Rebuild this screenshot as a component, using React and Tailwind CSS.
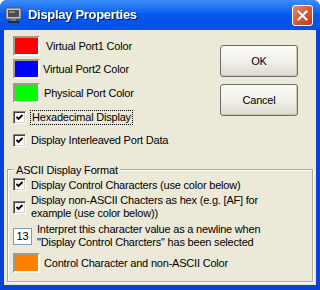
import React from "react";

const font = { fontFamily: '"Liberation Sans", Arial, sans-serif' };

function Swatch({ color }) {
  return (
    <div className="w-[27px] h-[20px] shrink-0 border-2 border-t-[#9d9b8e] border-l-[#9d9b8e] border-r-white border-b-white">
      <div className={`w-full h-full ${color}`}></div>
    </div>
  );
}

function CheckBox() {
  return (
    <div className="w-[13px] h-[13px] shrink-0 bg-white border border-t-[#808080] border-l-[#808080] border-r-white border-b-white shadow-[inset_1px_1px_0_#404040,inset_-1px_-1px_0_#d4d0c8] flex items-center justify-center">
      <svg width="9" height="9" viewBox="0 0 9 9">
        <path d="M1.5 4 L3.5 6 L7.5 2" stroke="#000" strokeWidth="1.8" fill="none" />
      </svg>
    </div>
  );
}

function XpButton({ children }) {
  return (
    <div className="w-[78px] h-[32px] rounded-[3px] border border-[#6d6d66] bg-gradient-to-b from-[#fbfbf8] via-[#f1f0ea] to-[#dcdad0] shadow-[inset_-1px_-1px_0_#c9c6b8] flex items-center justify-center text-[11px] text-black">
      {children}
    </div>
  );
}

export default function App() {
  return (
    <div className="w-[320px] h-[290px] flex flex-col bg-[#0842d8] rounded-t-[7px] overflow-hidden" style={font}>
      <div className="h-[30px] shrink-0 flex items-center bg-gradient-to-b from-[#3c8ef9] via-[#0358ee] to-[#0350e6] px-[5px]">
        <svg width="18" height="17" viewBox="0 0 18 17" className="shrink-0">
          <rect x="1" y="1" width="15" height="11" fill="#c8c8c8" stroke="#555" />
          <rect x="3" y="3" width="11" height="7" fill="#4d4d4d" />
          <rect x="4" y="4" width="6" height="2" fill="#8a8a8a" />
          <rect x="6" y="12" width="5" height="2" fill="#777" />
          <rect x="3" y="14" width="11" height="2" fill="#2a2a2a" />
        </svg>
        <div className="ml-[5px] text-white font-bold text-[13px] tracking-[-0.3px] drop-shadow-[1px_1px_0_#0a1f6a]">
          Display Properties
        </div>
        <div className="ml-auto mr-[2px] w-[21px] h-[21px] rounded-[3px] border border-white bg-gradient-to-br from-[#e8866a] via-[#d65a34] to-[#c1391a] flex items-center justify-center">
          <svg width="11" height="11" viewBox="0 0 11 11">
            <path d="M1.5 1.5 L9.5 9.5 M9.5 1.5 L1.5 9.5" stroke="#fff" strokeWidth="2" strokeLinecap="square" />
          </svg>
        </div>
      </div>
      <div className="flex-1 mx-[4px] mb-[5px] bg-[#ece9d8] text-[11px] tracking-[-0.2px] text-black flex flex-col">
        <div className="flex pl-[9px] pt-[6px]">
          <div className="flex flex-col">
            <div className="flex items-center h-[20px]">
              <Swatch color="bg-[#ff0000]" />
              <span className="ml-[6px]">Virtual Port1 Color</span>
            </div>
            <div className="flex items-center h-[20px] mt-[3px]">
              <Swatch color="bg-[#0000ff]" />
              <span className="ml-[3px]">Virtual Port2 Color</span>
            </div>
            <div className="flex items-center h-[20px] mt-[4px]">
              <Swatch color="bg-[#00ff00]" />
              <span className="ml-[4px]">Physical Port Color</span>
            </div>
          </div>
          <div className="ml-auto mr-[18px] mt-[9px] flex flex-col gap-[7px]">
            <XpButton>OK</XpButton>
            <XpButton>Cancel</XpButton>
          </div>
        </div>
        <div className="pl-[9px] mt-[-6px] flex flex-col gap-[7px]">
          <div className="flex items-center">
            <CheckBox />
            <span className="ml-[4px] px-[1px] border border-dotted border-black leading-[13px]">Hexadecimal Display</span>
          </div>
          <div className="flex items-center">
            <CheckBox />
            <span className="ml-[5px]">Display Interleaved Port Data</span>
          </div>
        </div>
        <div className="relative mx-[3px] mt-[20px] h-[113px] border border-[#aca899] shadow-[inset_1px_1px_0_#fff,1px_1px_0_#fff] px-[5px] pt-[7px] flex flex-col">
          <span className="absolute left-[6px] top-[-8px] bg-[#ece9d8] px-[2px]">ASCII Display Format</span>
          <div className="flex items-center">
            <CheckBox />
            <span className="ml-[5px]">Display Control Characters (use color below)</span>
          </div>
          <div className="flex items-center mt-[1px]">
            <CheckBox />
            <span className="ml-[5px] leading-[13px]">Display non-ASCII Chacters as hex (e.g. [AF] for<br />example (use color below))</span>
          </div>
          <div className="flex items-center mt-[3px]">
            <div className="w-[19px] h-[17px] shrink-0 bg-white border border-[#7f9db9] flex items-center justify-center text-[11px]">13</div>
            <span className="ml-[5px] leading-[13px]">Interpret this character value as a newline when<br />"Display Control Charcters" has been selected</span>
          </div>
          <div className="flex items-center mt-[4px]">
            <Swatch color="bg-[#ff8000]" />
            <span className="ml-[4px]">Control Character and non-ASCII Color</span>
          </div>
        </div>
      </div>
    </div>
  );
}
